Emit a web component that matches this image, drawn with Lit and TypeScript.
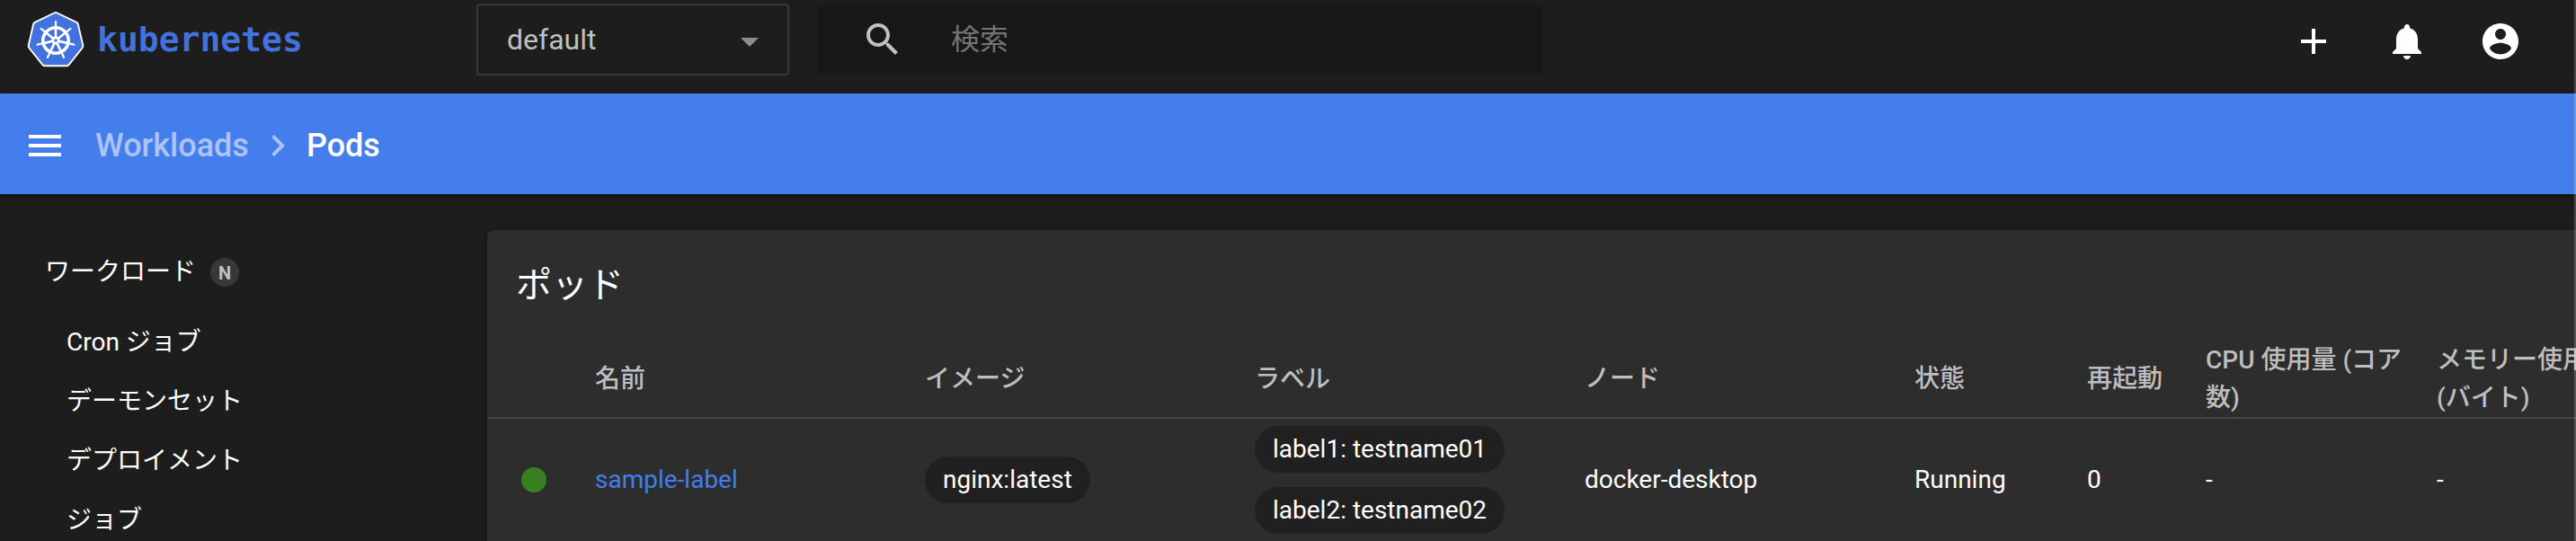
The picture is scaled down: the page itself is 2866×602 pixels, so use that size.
import { LitElement, html, css, svg } from "lit";
import { customElement, state } from "lit/decorators.js";

interface Pod {
  name: string;
  image: string;
  labels: string[];
  node: string;
  status: string;
  restarts: number;
  cpu: string;
  memory: string;
}

const PODS: Pod[] = [
  {
    name: "sample-label",
    image: "nginx:latest",
    labels: ["label1: testname01", "label2: testname02"],
    node: "docker-desktop",
    status: "Running",
    restarts: 0,
    cpu: "-",
    memory: "-",
  },
];

const WORKLOADS = ["Cron ジョブ", "デーモンセット", "デプロイメント", "ジョブ"];

const ICONS: Record<string, string> = {
  menu: "M3 18h18v-2H3v2zm0-5h18v-2H3v2zm0-7v2h18V6H3z",
  chevron: "M10 6L8.59 7.41 13.17 12l-4.58 4.59L10 18l6-6z",
  search:
    "M15.5 14h-.79l-.28-.27C15.41 12.59 16 11.11 16 9.5 16 5.91 13.09 3 9.5 3S3 5.91 3 9.5 5.91 16 9.5 16c1.61 0 3.09-.59 4.23-1.57l.27.28v.79l5 4.99L20.49 19l-4.99-5zm-6 0C7.01 14 5 11.99 5 9.5S7.01 5 9.5 5 14 7.01 14 9.5 11.99 14 9.5 14z",
  add: "M19 13h-6v6h-2v-6H5v-2h6V5h2v6h6v2z",
  bell: "M12 22c1.1 0 2-.9 2-2h-4c0 1.1.89 2 2 2zm6-6v-5c0-3.07-1.64-5.64-4.5-6.32V4c0-.83-.67-1.5-1.5-1.5s-1.5.67-1.5 1.5v.68C7.63 5.36 6 7.92 6 11v5l-2 2v1h16v-1l-2-2z",
  account:
    "M12 2C6.48 2 2 6.48 2 12s4.48 10 10 10 10-4.48 10-10S17.52 2 12 2zm0 3c1.66 0 3 1.34 3 3s-1.34 3-3 3-3-1.34-3-3 1.34-3 3-3zm0 14.2c-2.5 0-4.71-1.28-6-3.22.03-1.99 4-3.08 6-3.08 1.99 0 5.97 1.09 6 3.08-1.29 1.94-3.5 3.22-6 3.22z",
};

const icon = (name: string) => html`
  <svg class="icon" viewBox="0 0 24 24" aria-hidden="true"><path d=${ICONS[name]} /></svg>
`;

const heptagon = (cx: number, cy: number, r: number) =>
  Array.from({ length: 7 }, (_, i) => {
    const a = (i * 2 * Math.PI) / 7 - Math.PI / 2;
    return `${(cx + r * Math.cos(a)).toFixed(2)},${(cy + r * Math.sin(a)).toFixed(2)}`;
  }).join(" ");

const wheel = html`
  <svg class="wheel" viewBox="0 0 64 64" aria-hidden="true">
    <polygon points=${heptagon(32, 33, 28)} fill="#fff" stroke="#fff" stroke-width="8" stroke-linejoin="round" />
    <polygon points=${heptagon(32, 33, 27)} fill="#4172df" stroke="#4172df" stroke-width="6" stroke-linejoin="round" />
    <g fill="none" stroke="#fff" stroke-linecap="round">
      <circle cx="32" cy="33" r="14.2" stroke-width="3.6" />
      ${[0, 1, 2, 3, 4, 5, 6].map(
        (i) => svg`<g transform="rotate(${(i * 360) / 7} 32 33)">
          <path d="M32 29V19" stroke-width="2.6" />
          <path d="M32 18.500V12" stroke-width="2.2" />
        </g>`
      )}
    </g>
    <circle cx="32" cy="33" r="4.600" fill="#fff" />
    <circle cx="32" cy="33" r="1.800" fill="#4172df" />
  </svg>
`;

@customElement("app-root")
export class AppRoot extends LitElement {
  @state() private pods = PODS;

  static styles = css`
    :host {
      display: flex;
      flex-direction: column;
      position: relative;
      height: 100vh;
      overflow: hidden;
      background: #1d1d1d;
      color: #fff;
      font: 28px/42px Roboto, "Noto Sans CJK JP", sans-serif;
    }
    * {
      box-sizing: border-box;
    }
    a {
      color: inherit;
      text-decoration: none;
    }
    .icon {
      display: block;
      width: 48px;
      height: 48px;
      flex: none;
      fill: currentColor;
    }
    .icon-button {
      padding: 0;
      border: 0;
      background: none;
      color: inherit;
    }
    .topbar {
      display: flex;
      align-items: flex-start;
      flex: none;
      height: 104px;
      padding: 4px 60px 0 30px;
    }
    .brand {
      display: flex;
      align-items: center;
      gap: 14px;
      width: 500px;
      height: 80px;
      color: #4172df;
      font: bold 38px/48px "DejaVu Sans Mono", monospace;
    }
    .wheel {
      width: 64px;
      height: 64px;
    }
    .namespace {
      display: flex;
      align-items: center;
      position: relative;
      width: 348px;
      height: 80px;
      margin-right: 32px;
    }
    .namespace select {
      width: 100%;
      height: 100%;
      padding: 0 32px;
      appearance: none;
      border: 2px solid #383838;
      border-radius: 4px;
      background: none;
      color: #c0c0c0;
      font: inherit;
      font-size: 32px;
    }
    .arrow {
      position: absolute;
      right: 34px;
      top: 38px;
      border: 10px solid transparent;
      border-top-color: #8e8e8e;
      border-bottom: 0;
      pointer-events: none;
    }
    .search {
      display: flex;
      align-items: center;
      gap: 52px;
      width: 806px;
      height: 76px;
      margin-top: 2px;
      padding: 0 48px;
      border-radius: 4px;
      background: #171717;
      color: #c0c0c0;
    }
    .search input {
      flex: 1;
      min-width: 0;
      padding: 0;
      border: 0;
      outline: 0;
      background: none;
      color: inherit;
      font: inherit;
      font-size: 32px;
    }
    .search input::placeholder {
      color: #747474;
      opacity: 1;
    }
    .actions {
      display: flex;
      gap: 56px;
      margin: 18px 0 0 auto;
    }
    .toolbar {
      display: flex;
      align-items: center;
      flex: none;
      position: relative;
      height: 112px;
      padding: 4px 26px 0;
      gap: 32px;
      background: #447eec;
      box-shadow: 0 2px 8px rgba(0, 0, 0, 0.5);
      font-size: 36px;
      font-weight: 500;
    }
    .crumbs {
      display: flex;
      align-items: center;
      gap: 8px;
    }
    .muted {
      color: #abc3f7;
    }
    .body {
      display: flex;
      flex: 1;
      min-height: 0;
    }
    .sidebar {
      flex: none;
      width: 542px;
      padding: 66px 50px 0;
    }
    .group {
      display: flex;
      align-items: center;
      gap: 16px;
      height: 42px;
    }
    .badge {
      width: 32px;
      height: 32px;
      border-radius: 50%;
      background: #383838;
      color: #c0c0c0;
      font-size: 20px;
      font-weight: 700;
      line-height: 34px;
      text-align: center;
    }
    .links {
      display: grid;
      gap: 24px;
      margin: 36px 0 0;
      padding: 0 0 0 24px;
      list-style: none;
    }
    .main {
      flex: 1;
      min-width: 0;
      padding-top: 40px;
    }
    .card {
      min-width: 2426px;
      border-radius: 8px 8px 0 0;
      background: #2d2d2d;
      box-shadow: 0 2px 6px rgba(0, 0, 0, 0.4);
    }
    .title {
      margin: 0;
      padding: 32px 32px 24px;
      font-size: 40px;
      font-weight: 400;
      line-height: 60px;
    }
    .pods {
      width: 100%;
      table-layout: fixed;
      border-collapse: separate;
      border-spacing: 0;
    }
    .c-dot { width: 120px; }
    .c-status { width: 192px; }
    .c-restarts { width: 132px; }
    .c-usage { width: 257px; }
    .pods th,
    .pods td {
      padding: 0 24px 0 0;
      text-align: left;
      vertical-align: middle;
      border-bottom: 2px solid #484848;
    }
    .pods th {
      height: 94px;
      padding-top: 8px;
      color: #bebebe;
      font-weight: 500;
    }
    .pods .whole-words {
      word-break: keep-all;
    }
    .pods td {
      height: 138px;
    }
    .dot {
      display: block;
      width: 28px;
      height: 28px;
      margin-left: 38px;
      border-radius: 50%;
      background: #387f22;
    }
    .link {
      color: #447eec;
    }
    .chips {
      display: flex;
      flex-direction: column;
      align-items: flex-start;
      gap: 16px;
      padding: 8px 0;
    }
    .chip {
      padding: 0 20px;
      border-radius: 26px;
      background: #202020;
      line-height: 52px;
      white-space: nowrap;
    }
    .edge {
      position: absolute;
      inset: 0 0 0 auto;
      width: 2px;
      background: rgba(255, 255, 255, 0.2);
    }
  `;

  render() {
    return html`
      <header class="topbar">
        <a class="brand" href="#/">${wheel}<span>kubernetes</span></a>
        <div class="namespace">
          <select aria-label="Namespace"><option>default</option></select>
          <span class="arrow"></span>
        </div>
        <label class="search">
          ${icon("search")}
          <input type="text" placeholder="検索" aria-label="検索" />
        </label>
        <div class="actions">
          <button class="icon-button" aria-label="Create">${icon("add")}</button>
          <button class="icon-button" aria-label="Notifications">${icon("bell")}</button>
          <button class="icon-button" aria-label="Account">${icon("account")}</button>
        </div>
      </header>
      <div class="toolbar">
        <button class="icon-button" aria-label="Menu">${icon("menu")}</button>
        <nav class="crumbs" aria-label="Breadcrumb">
          <a class="muted" href="#/workloads">Workloads</a>
          <span class="muted">${icon("chevron")}</span>
          <span>Pods</span>
        </nav>
      </div>
      <div class="body">
        <nav class="sidebar" aria-label="ワークロード">
          <div class="group"><a href="#/workloads">ワークロード</a><span class="badge">N</span></div>
          <ul class="links">
            ${WORKLOADS.map((w) => html`<li><a href="#/workloads">${w}</a></li>`)}
          </ul>
        </nav>
        <main class="main">
          <section class="card">
            <h1 class="title">ポッド</h1>
            <table class="pods">
              <colgroup>
                <col class="c-dot" /><col /><col /><col /><col />
                <col class="c-status" /><col class="c-restarts" />
                <col class="c-usage" /><col class="c-usage" />
              </colgroup>
              <thead>
                <tr>
                  <th></th>
                  <th>名前</th>
                  <th>イメージ</th>
                  <th>ラベル</th>
                  <th>ノード</th>
                  <th>状態</th>
                  <th>再起動</th>
                  <th>CPU 使用量 (コア数)</th>
                  <th class="whole-words">メモリー使用量 (バイト)</th>
                </tr>
              </thead>
              <tbody>
                ${this.pods.map(
                  (p) => html`<tr>
                    <td><span class="dot"></span></td>
                    <td><a class="link" href="#/pod">${p.name}</a></td>
                    <td><div class="chips"><span class="chip">${p.image}</span></div></td>
                    <td>
                      <div class="chips">${p.labels.map((l) => html`<span class="chip">${l}</span>`)}</div>
                    </td>
                    <td>${p.node}</td>
                    <td>${p.status}</td>
                    <td>${p.restarts}</td>
                    <td>${p.cpu}</td>
                    <td>${p.memory}</td>
                  </tr>`
                )}
              </tbody>
            </table>
          </section>
        </main>
      </div>
      <div class="edge"></div>
    `;
  }
}
